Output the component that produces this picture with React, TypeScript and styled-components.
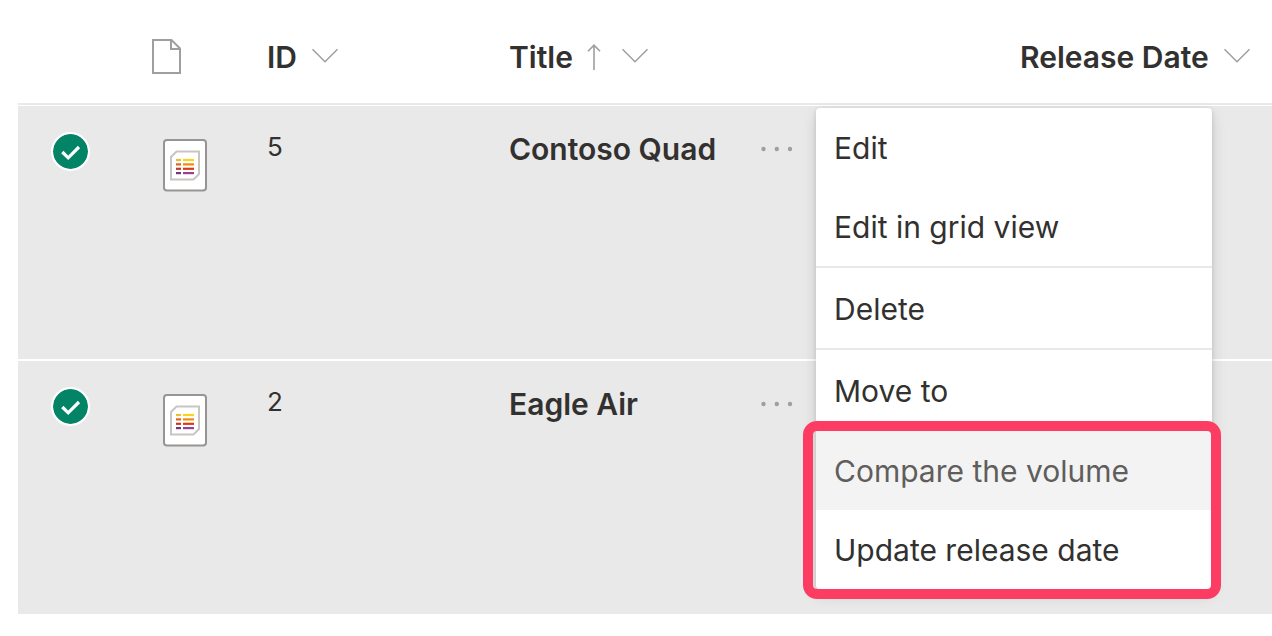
import React from "react";
import styled, { createGlobalStyle } from "styled-components";

const GlobalStyle = createGlobalStyle`
  *, *::before, *::after { box-sizing: border-box; }
  body {
    margin: 0;
    background: #ffffff;
    color: #323130;
    font-family: Inter, "Liberation Sans", sans-serif;
    overflow-x: hidden;
  }
  button { font: inherit; color: inherit; background: none; border: 0; padding: 0; cursor: pointer; }
`;

const Page = styled.main`
  padding-left: 18px;
`;

const ListTable = styled.table`
  width: 100%;
  table-layout: fixed;
  border-collapse: separate;
  border-spacing: 0;
`;

const Column = styled.col<{ $width?: number }>`
  width: ${({ $width }) => ($width ? `${$width}px` : "auto")};
`;

const HeaderCell = styled.th`
  height: 105px;
  padding: 11px 0 0;
  border-bottom: 2px solid #e9e9e9;
  text-align: left;
  vertical-align: middle;
  white-space: nowrap;
`;

const HeaderButton = styled.button`
  display: flex;
  align-items: center;
  gap: 14px;
  font-size: 30px;
  line-height: 40px;
  font-weight: 600;
`;

const HeaderIcons = styled.span`
  display: flex;
  align-items: center;
  gap: 20px;
`;

const Row = styled.tr`
  &:first-child > td {
    height: 256px;
    border-top: 1px solid #ffffff;
  }
`;

const Cell = styled.td<{ $top: number; $indent?: number }>`
  height: 255px;
  padding: ${({ $top }) => $top}px 0 0 ${({ $indent }) => $indent ?? 0}px;
  border-bottom: 2px solid #ffffff;
  background: #e9e9e9;
  vertical-align: top;
`;

const CheckLabel = styled.label`
  display: grid;
  width: 39px;
  height: 39px;
  > * { grid-area: 1 / 1; }
  svg { pointer-events: none; }
`;

const CheckInput = styled.input`
  appearance: none;
  width: 39px;
  height: 39px;
  margin: 0;
  border: 2px solid #ffffff;
  border-radius: 50%;
  background: #ffffff;
  &:checked { background: #038467 padding-box; }
  &:not(:checked) + svg { visibility: hidden; }
`;

const Icon = styled.svg`
  display: block;
  flex: none;
  fill: none;
`;

const IdText = styled.span`
  display: block;
  font-size: 26px;
  line-height: 34px;
`;

const TitleLine = styled.div`
  display: flex;
  align-items: center;
`;

const TitleLink = styled.a`
  flex: 0 0 252px;
  color: inherit;
  text-decoration: none;
  font-size: 30px;
  line-height: 40px;
  font-weight: 600;
  white-space: nowrap;
`;

const MenuAnchor = styled.div`
  position: relative;
  height: 40px;
  display: flex;
  align-items: center;
`;

const Menu = styled.div`
  position: absolute;
  left: 55px;
  top: -21px;
  z-index: 2;
  width: 396px;
  background: #ffffff;
  border-radius: 4px;
  box-shadow: 0 6px 15px rgba(0, 0, 0, 0.13), 0 1px 4px rgba(0, 0, 0, 0.13);
`;

const MenuSection = styled.div`
  & + & {
    border-top: 2px solid #e9e9e9;
    padding-top: 1px;
  }
`;

const HighlightedSection = styled.div`
  position: relative;
  margin-top: 1px;
  &::after {
    content: "";
    position: absolute;
    inset: -10px -9px -10px -13px;
    border: 10px solid #fc3c62;
    border-radius: 14px;
    pointer-events: none;
  }
`;

const MenuItem = styled.button<{ $hovered?: boolean }>`
  display: block;
  width: 100%;
  height: 79px;
  padding: 0 18px;
  text-align: left;
  font-size: 30px;
  line-height: 40px;
  white-space: nowrap;
  color: ${({ $hovered }) => ($hovered ? "#605e5c" : "#323130")};
  background: ${({ $hovered }) => ($hovered ? "#f3f3f3" : "transparent")};
  &:last-child { border-radius: 0 0 4px 4px; }
`;

const Chevron = () => (
  <Icon width="28" height="28" viewBox="0 0 28 28" stroke="#a19f9d" strokeWidth="1.5" aria-hidden="true">
    <path d="M1.5 6.3 14 18.8 26.5 6.3" />
  </Icon>
);

const SortUp = () => (
  <Icon width="14" height="28" viewBox="0 0 14 28" stroke="#a19f9d" strokeWidth="1.6" aria-hidden="true">
    <path d="M7 27V2M1 8.2 7 2.2 13 8.2" />
  </Icon>
);

const FileIcon = () => (
  <Icon width="30" height="36" viewBox="0 0 30 36" stroke="#a19f9d" strokeWidth="2" role="img" aria-label="File type">
    <path d="M1 1H19.5L28 9.5V34H1ZM19 1V10H28" />
  </Icon>
);

const ListItemIcon = () => (
  <Icon width="44" height="53" viewBox="0 0 44 53" role="img" aria-label="List item">
    <rect x="1" y="1" width="42" height="50.5" rx="3" fill="#fff" stroke="#979593" strokeWidth="2" />
    <path d="M13.5 12.5H36V35L30.5 40.5H8V18Z" stroke="#c8c6c4" strokeWidth="2" />
    <g strokeWidth="2.2">
      <path d="M13 21H18" stroke="#e8c22e" />
      <path d="M20 21H31" stroke="#fdd31a" />
      <path d="M13 25.4H18" stroke="#e0621c" />
      <path d="M20 25.4H31" stroke="#f28a0c" />
      <path d="M13 29.8H18" stroke="#c43a1a" />
      <path d="M20 29.8H31" stroke="#dd3c0c" />
      <path d="M13 34.1H18" stroke="#78347a" />
      <path d="M20 34.1H31" stroke="#984094" />
    </g>
  </Icon>
);

const MoreDots = () => (
  <Icon width="34" height="8" viewBox="0 0 34 8" aria-hidden="true">
    <g fill="#a19f9d">
      <circle cx="2.5" cy="4" r="2.2" />
      <circle cx="15.8" cy="4" r="2.2" />
      <circle cx="29" cy="4" r="2.2" />
    </g>
  </Icon>
);

const items = [
  { id: 5, title: "Contoso Quad", menuOpen: true },
  { id: 2, title: "Eagle Air", menuOpen: false },
];

const ContextMenu = () => (
  <Menu role="menu">
    <MenuSection>
      <MenuItem role="menuitem">Edit</MenuItem>
      <MenuItem role="menuitem">Edit in grid view</MenuItem>
    </MenuSection>
    <MenuSection>
      <MenuItem role="menuitem">Delete</MenuItem>
    </MenuSection>
    <MenuSection>
      <MenuItem role="menuitem">Move to</MenuItem>
    </MenuSection>
    <HighlightedSection>
      <MenuItem role="menuitem" $hovered>Compare the volume</MenuItem>
      <MenuItem role="menuitem">Update release date</MenuItem>
    </HighlightedSection>
  </Menu>
);

export default function App() {
  return (
    <Page>
      <GlobalStyle />
      <ListTable>
        <colgroup>
          <Column $width={134} />
          <Column $width={115} />
          <Column $width={242} />
          <Column $width={511} />
          <Column />
        </colgroup>
        <thead>
          <tr>
            <HeaderCell scope="col" aria-label="Selected" />
            <HeaderCell scope="col">
              <HeaderButton><FileIcon /></HeaderButton>
            </HeaderCell>
            <HeaderCell scope="col">
              <HeaderButton>ID<Chevron /></HeaderButton>
            </HeaderCell>
            <HeaderCell scope="col" aria-sort="ascending">
              <HeaderButton>
                Title
                <HeaderIcons><SortUp /><Chevron /></HeaderIcons>
              </HeaderButton>
            </HeaderCell>
            <HeaderCell scope="col">
              <HeaderButton>Release Date<Chevron /></HeaderButton>
            </HeaderCell>
          </tr>
        </thead>
        <tbody>
          {items.map((item) => (
            <Row key={item.id}>
              <Cell $top={26} $indent={33}>
                <CheckLabel>
                  <CheckInput type="checkbox" defaultChecked aria-label={`Select ${item.title}`} />
                  <Icon width="39" height="39" viewBox="0 0 39 39" stroke="#fff" strokeWidth="3.2">
                    <path d="M11.3 20 17.2 25.8 28 15" />
                  </Icon>
                </CheckLabel>
              </Cell>
              <Cell $top={33} $indent={11}><ListItemIcon /></Cell>
              <Cell $top={24}><IdText>{item.id}</IdText></Cell>
              <Cell $top={23}>
                <TitleLine>
                  <TitleLink href="#">{item.title}</TitleLink>
                  <MenuAnchor>
                    <button aria-label={`More actions for ${item.title}`} aria-haspopup="menu">
                      <MoreDots />
                    </button>
                    {item.menuOpen && <ContextMenu />}
                  </MenuAnchor>
                </TitleLine>
              </Cell>
              <Cell $top={24} />
            </Row>
          ))}
        </tbody>
      </ListTable>
    </Page>
  );
}
